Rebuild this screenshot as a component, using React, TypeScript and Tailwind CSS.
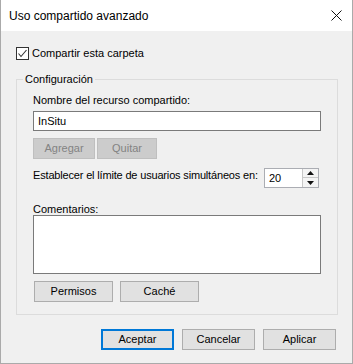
import React from "react";

function Btn({ w, children, def = false, disabled = false, className = "" }: { w: string; children: React.ReactNode; def?: boolean; disabled?: boolean; className?: string }) {
  const base = "h-[21px] flex items-center justify-center leading-none";
  let style = "bg-[#e1e1e1] border border-[#adadad] text-black";
  if (def) style = "bg-[#e1e1e1] border-2 border-[#0078d7] text-black";
  if (disabled) style = "bg-[#cccccc] border border-[#bfbfbf] text-[#838383]";
  return <div className={`${base} ${style} ${w} ${className}`}>{children}</div>;
}

export default function App() {
  return (
    <div className="w-[353px] h-[364px] bg-[#f0f0f0] border-x border-b border-[#aaaaaa] flex flex-col text-[11px] text-black font-['Liberation_Sans',Arial,sans-serif]">
      <div className="h-[31px] bg-white flex items-center justify-between pl-[8px] pr-[9px]">
        <span className="text-[12px]">Uso compartido avanzado</span>
        <svg width="11" height="11" viewBox="0 0 11 11" className="mr-[1px]">
          <path d="M0.5 0.5 L10.5 10.5 M10.5 0.5 L0.5 10.5" stroke="#111" strokeWidth="1" fill="none" />
        </svg>
      </div>

      <div className="flex flex-col px-[15px]">
        <div className="mt-[16px] h-[13px] flex items-center">
          <div className="w-[13px] h-[13px] border border-[#333333] bg-white flex items-center justify-center">
            <svg width="11" height="11" viewBox="0 0 11 11">
              <path d="M1.5 5.5 L4 8.5 L9.5 2" stroke="#333" strokeWidth="1.1" fill="none" />
            </svg>
          </div>
          <span className="ml-[3px]">Compartir esta carpeta</span>
        </div>

        <fieldset className="mt-[12px] w-[321px] border border-[#dcdcdc]">
          <legend className="ml-[6px] px-[2px] leading-[14px]">Configuración</legend>
          <div className="px-[16px] pb-[12px] flex flex-col">
            <div className="mt-[6px] leading-[16px] h-[16px]">Nombre del recurso compartido:</div>
            <div className="mt-[3px] w-[288px] h-[20px] border border-[#7a7a7a] bg-white flex items-center pl-[4px]">InSitu</div>
            <div className="mt-[7px] flex gap-[2px]">
              <Btn w="w-[62px]" disabled>Agregar</Btn>
              <Btn w="w-[60px]" disabled>Quitar</Btn>
            </div>
            <div className="mt-[9px] h-[20px] flex items-start">
              <span className="leading-[14px] whitespace-nowrap tracking-[-0.17px]">Establecer el límite de usuarios simultáneos en:</span>
              <div className="ml-auto mr-[2px] w-[55px] h-[20px] border border-[#abadb3] bg-white flex shrink-0">
                <div className="flex-1 flex items-center pl-[4px]">20</div>
                <div className="w-[16px] flex flex-col border-l border-[#c8c8c8] bg-[#f4f4f4]">
                  <div className="h-[9px] flex items-center justify-center border-b border-[#c8c8c8]">
                    <svg width="7" height="4" viewBox="0 0 7 4"><path d="M3.5 0 L7 4 L0 4 Z" fill="#111" /></svg>
                  </div>
                  <div className="flex-1 flex items-center justify-center">
                    <svg width="7" height="4" viewBox="0 0 7 4"><path d="M0 0 L7 0 L3.5 4 Z" fill="#111" /></svg>
                  </div>
                </div>
              </div>
            </div>
            <div className="mt-[15px] h-[12px] leading-[12px]">Comentarios:</div>
            <div className="w-[288px] h-[59px] border border-[#7a7a7a] bg-white" />
            <div className="mt-[7px] ml-[1px] flex gap-[7px]">
              <Btn w="w-[79px]">Permisos</Btn>
              <Btn w="w-[79px]">Caché</Btn>
            </div>
          </div>
        </fieldset>

        <div className="mt-[14px] flex justify-end gap-[8px] pr-[1px]">
          <Btn w="w-[73px]" def>Aceptar</Btn>
          <Btn w="w-[73px]">Cancelar</Btn>
          <Btn w="w-[73px]">Aplicar</Btn>
        </div>
      </div>
    </div>
  );
}
